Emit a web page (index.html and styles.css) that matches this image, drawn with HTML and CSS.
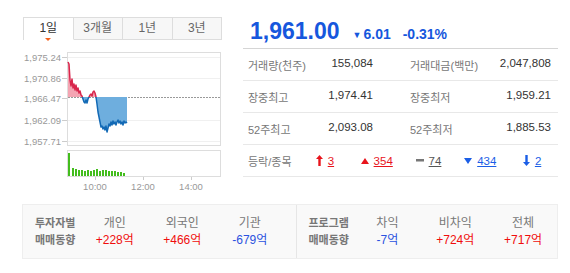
FILE: index.html
```html
<!DOCTYPE html>
<html lang="ko">
<head>
    <meta charset="UTF-8">
    <title>코스피 시세</title>
    <link rel="stylesheet" href="styles.css">
</head>
<body>
    <div class="page">
        <div class="top">
            <div class="left">
                <ul class="tabs">
                    <li class="tab on">1일</li>
                    <li class="tab">3개월</li>
                    <li class="tab">1년</li>
                    <li class="tab">3년</li>
                </ul>
                <svg class="chart" width="206" height="146" viewBox="16 48 206 146">
                    <defs>
                        <clipPath id="upClip"><rect x="67" y="50" width="155" height="47"/></clipPath>
                        <clipPath id="downClip"><rect x="67" y="97" width="155" height="50"/></clipPath>
                    </defs>
                    <g class="ylab">
                        <text x="61" y="61">1,975.24</text>
                        <text x="61" y="82">1,970.86</text>
                        <text x="61" y="102">1,966.47</text>
                        <text x="61" y="124">1,962.09</text>
                        <text x="61" y="145">1,957.71</text>
                    </g>
                    <g class="tick">
                        <line x1="62" y1="57.5" x2="67" y2="57.5"/>
                        <line x1="62" y1="78.5" x2="67" y2="78.5"/>
                        <line x1="62" y1="98.5" x2="67" y2="98.5"/>
                        <line x1="62" y1="120.5" x2="67" y2="120.5"/>
                        <line x1="62" y1="141.5" x2="67" y2="141.5"/>
                    </g>
                    <rect class="box" x="67.5" y="52.5" width="153" height="93"/>
                    <g class="grid">
                        <line x1="68" y1="57.5" x2="220" y2="57.5"/>
                        <line x1="68" y1="78.5" x2="220" y2="78.5"/>
                        <line x1="68" y1="120.5" x2="220" y2="120.5"/>
                        <line x1="68" y1="141.5" x2="220" y2="141.5"/>
                    </g>
                    <line class="base" x1="68" y1="97.5" x2="220" y2="97.5"/>
                    <polygon class="area-up" clip-path="url(#upClip)" points="68,97 68,62 69,64 70,80 71,86 72,79 73,88 74,84 75,90 76,85 77,91 78,88 79,93 80,91 81,95 82,96 83,99 84,102 85,103 86,100 87,103 88,99 89,97 90,95 91,94 92,96 93,92 94,91 95,93 96,97 97,104 98,112 99,117 100,122 101,127 102,126 103,129 104,127 105,130 106,126 107,132 108,128 109,124 110,126 111,122 112,125 113,121 114,124 115,122 116,125 117,122 118,120 119,123 120,121 121,124 122,122 123,125 124,121 125,123 126,122 127,123 127,97"/>
                    <polygon class="area-down" clip-path="url(#downClip)" points="68,97 68,62 69,64 70,80 71,86 72,79 73,88 74,84 75,90 76,85 77,91 78,88 79,93 80,91 81,95 82,96 83,99 84,102 85,103 86,100 87,103 88,99 89,97 90,95 91,94 92,96 93,92 94,91 95,93 96,97 97,104 98,112 99,117 100,122 101,127 102,126 103,129 104,127 105,130 106,126 107,132 108,128 109,124 110,126 111,122 112,125 113,121 114,124 115,122 116,125 117,122 118,120 119,123 120,121 121,124 122,122 123,125 124,121 125,123 126,122 127,123 127,97"/>
                    <polyline class="line-up" clip-path="url(#upClip)" points="68,62 69,64 70,80 71,86 72,79 73,88 74,84 75,90 76,85 77,91 78,88 79,93 80,91 81,95 82,96 83,99 84,102 85,103 86,100 87,103 88,99 89,97 90,95 91,94 92,96 93,92 94,91 95,93 96,97 97,104"/>
                    <polyline class="line-down" clip-path="url(#downClip)" points="81,95 82,96 83,99 84,102 85,103 86,100 87,103 88,99 89,97 90,95 95,93 96,97 97,104 98,112 99,117 100,122 101,127 102,126 103,129 104,127 105,130 106,126 107,132 108,128 109,124 110,126 111,122 112,125 113,121 114,124 115,122 116,125 117,122 118,120 119,123 120,121 121,124 122,122 123,125 124,121 125,123 126,122 127,123"/>
                    <rect class="box" x="67.5" y="150.5" width="153" height="26"/>
                    <g class="bars">
                        <rect x="68" y="153" width="2" height="23"/>
                        <rect x="72" y="168" width="2" height="8"/>
                        <rect x="75" y="169" width="2" height="7"/>
                        <rect x="78" y="170" width="2" height="6"/>
                        <rect x="81" y="170" width="2" height="6"/>
                        <rect x="84" y="171" width="2" height="5"/>
                        <rect x="87" y="170" width="2" height="6"/>
                        <rect x="90" y="171" width="2" height="5"/>
                        <rect x="93" y="170" width="2" height="6"/>
                        <rect x="96" y="169" width="2" height="7"/>
                        <rect x="99" y="171" width="2" height="5"/>
                        <rect x="102" y="170" width="2" height="6"/>
                        <rect x="105" y="170" width="2" height="6"/>
                        <rect x="108" y="171" width="2" height="5"/>
                        <rect x="111" y="171" width="2" height="5"/>
                        <rect x="114" y="171" width="2" height="5"/>
                        <rect x="117" y="172" width="2" height="4"/>
                        <rect x="120" y="172" width="2" height="4"/>
                        <rect x="123" y="173" width="2" height="3"/>
                    </g>
                    <g class="tick">
                        <line x1="95.5" y1="177" x2="95.5" y2="180"/>
                        <line x1="143.5" y1="177" x2="143.5" y2="180"/>
                        <line x1="191.5" y1="177" x2="191.5" y2="180"/>
                    </g>
                    <g class="xlab">
                        <text x="95" y="190">10:00</text>
                        <text x="143" y="190">12:00</text>
                        <text x="191" y="190">14:00</text>
                    </g>
                </svg>
            </div>
            <div class="right">
                <div class="price">
                    <strong class="now">1,961.00</strong>
                    <span class="chg"><em class="tri">▼</em>6.01</span>
                    <span class="rate">-0.31%</span>
                </div>
                <div class="stats">
                    <div class="row">
                        <div class="half"><span class="lab">거래량(천주)</span><span class="val">155,084</span></div>
                        <div class="half"><span class="lab">거래대금(백만)</span><span class="val">2,047,808</span></div>
                    </div>
                    <div class="row">
                        <div class="half"><span class="lab">장중최고</span><span class="val">1,974.41</span></div>
                        <div class="half"><span class="lab">장중최저</span><span class="val">1,959.21</span></div>
                    </div>
                    <div class="row">
                        <div class="half"><span class="lab">52주최고</span><span class="val">2,093.08</span></div>
                        <div class="half"><span class="lab">52주최저</span><span class="val">1,885.53</span></div>
                    </div>
                    <div class="row updown">
                        <span class="lab">등락/종목</span>
                        <a class="cnt red" href="#">
                            <svg width="7" height="11" viewBox="0 0 7 11"><path d="M3.5 0 L7 4 L4.7 4 L4.7 11 L2.3 11 L2.3 4 L0 4 Z"/></svg><u>3</u>
                        </a>
                        <a class="cnt red" href="#">
                            <svg width="8" height="6" viewBox="0 0 8 6"><path d="M4 0 L8 6 L0 6 Z"/></svg><u>354</u>
                        </a>
                        <a class="cnt gray" href="#">
                            <svg width="8" height="3" viewBox="0 0 8 3"><rect width="8" height="2.5"/></svg><u>74</u>
                        </a>
                        <a class="cnt blue" href="#">
                            <svg width="8" height="6" viewBox="0 0 8 6"><path d="M0 0 L8 0 L4 6 Z"/></svg><u>434</u>
                        </a>
                        <a class="cnt blue" href="#">
                            <svg width="7" height="11" viewBox="0 0 7 11"><path d="M2.3 0 L4.7 0 L4.7 7 L7 7 L3.5 11 L0 7 L2.3 7 Z"/></svg><u>2</u>
                        </a>
                    </div>
                </div>
            </div>
        </div>
        <div class="flow">
            <div class="group investor">
                <div class="ttl">투자자별<br>매매동향</div>
                <div class="cell"><span class="who">개인</span><span class="amt red">+228억</span></div>
                <div class="cell"><span class="who">외국인</span><span class="amt red">+466억</span></div>
                <div class="cell"><span class="who">기관</span><span class="amt blue">-679억</span></div>
            </div>
            <div class="group program">
                <div class="ttl">프로그램<br>매매동향</div>
                <div class="cell"><span class="who">차익</span><span class="amt blue">-7억</span></div>
                <div class="cell"><span class="who">비차익</span><span class="amt red">+724억</span></div>
                <div class="cell"><span class="who">전체</span><span class="amt red">+717억</span></div>
            </div>
        </div>
    </div>
</body>
</html>
```
FILE: styles.css
```css
body {
    margin: 0;
    padding: 0;
    background: #fff;
    color: #333;
    font-family: "Liberation Sans", "Noto Sans CJK KR", Arial, sans-serif;
    font-size: 12px;
}

.page {
    width: 570px;
    padding-top: 17px;
}

.top {
    display: flex;
}

/* left: period tabs + chart */
.left {
    width: 206px;
    margin-left: 16px;
}

.tabs {
    display: grid;
    grid-template-columns: repeat(4, 1fr);
    margin: 0 0 0 7px;
    padding: 0;
    list-style: none;
    height: 23px;
    border-top: 1px solid #ddd;
    border-left: 1px solid #ddd;
    box-sizing: border-box;
}

.tab {
    position: relative;
    background: #f7f7f7;
    border-right: 1px solid #ddd;
    border-bottom: 1px solid #ddd;
    color: #666;
    text-align: center;
    line-height: 21px;
    font-size: 12px;
}

.tab.on {
    background: #fff;
    border-bottom-color: #fff;
    color: #333;
}

.tab.on::after {
    content: "";
    position: absolute;
    left: 50%;
    bottom: -2px;
    margin-left: -3px;
    border-left: 3px solid transparent;
    border-right: 3px solid transparent;
    border-top: 3px solid #f5621e;
}

.chart {
    display: block;
    margin-top: 8px;
}

.chart text {
    font-family: "Liberation Sans", Arial, sans-serif;
    font-size: 9.5px;
    fill: #999;
}

.ylab text {
    text-anchor: end;
}

.xlab text {
    text-anchor: middle;
}

.tick line {
    stroke: #ccc;
    stroke-width: 1;
}

.box {
    fill: #fff;
    stroke: #ddd;
    stroke-width: 1;
}

.grid line {
    stroke: #f0f0f0;
    stroke-width: 1;
}

.base {
    stroke: #999;
    stroke-width: 1;
    stroke-dasharray: 2 1;
}

.area-up {
    fill: #f4a5b3;
}

.area-down {
    fill: #6eaede;
}

.line-up,
.line-down {
    fill: none;
    stroke-width: 1.5;
    stroke-linejoin: round;
}

.line-up {
    stroke: #d8264c;
}

.line-down {
    stroke: #1269b5;
}

.bars rect {
    fill: #43bd1d;
}

/* right: current price + stats */
.right {
    width: 315px;
    margin-left: 21px;
}

.price {
    display: flex;
    align-items: baseline;
    height: 31px;
    padding-left: 7px;
    border-bottom: 1px solid #d5d5d5;
    color: #1657dd;
    font-family: "Liberation Sans", Arial, sans-serif;
    font-weight: bold;
}

.now {
    font-size: 23px;
    line-height: 28px;
}

.chg {
    margin-left: 13px;
    font-size: 14px;
}

.tri {
    font-style: normal;
    font-size: 9px;
    margin-right: 2px;
    vertical-align: 1px;
}

.rate {
    margin-left: 12px;
    font-size: 14px;
}

.row {
    display: grid;
    grid-template-columns: 135px 1fr;
    column-gap: 27px;
    height: 31px;
    border-bottom: 1px solid #e8e8e8;
    align-items: center;
}

.half {
    display: flex;
    justify-content: space-between;
    padding: 0 5px;
}

.half + .half {
    padding-right: 7px;
}

.lab {
    color: #777;
    font-size: 11px;
}

.val {
    color: #333;
    font-size: 11.5px;
}

.row.updown {
    grid-template-columns: 51px repeat(5, 1fr);
    column-gap: 0;
    padding-left: 5px;
}

.cnt {
    display: flex;
    align-items: center;
    justify-content: center;
    gap: 5px;
    font-size: 11.5px;
    text-decoration: none;
}

.cnt svg {
    display: block;
}

.cnt.red { color: #e8141c; }
.cnt.red svg { fill: #e8141c; }
.cnt.gray { color: #555; }
.cnt.gray svg { fill: #777; }
.cnt.blue { color: #1b5ee6; }
.cnt.blue svg { fill: #1b5ee6; }

/* investor / program flow */
.flow {
    display: flex;
    margin: 10px 0 0 22px;
    width: 536px;
    height: 55px;
    background: #f9f9f9;
    border: 1px solid #eee;
    box-sizing: border-box;
}

.group {
    flex: 1;
    display: grid;
    grid-template-columns: 58px repeat(3, 1fr);
    align-items: center;
    padding-right: 12px;
}

.group.program {
    grid-template-columns: 57px repeat(3, 1fr);
    padding-right: 0;
    border-left: 1px solid #e6e6e6;
}

.ttl {
    padding-left: 12px;
    color: #777;
    font-weight: bold;
    font-size: 11px;
    line-height: 17px;
    white-space: nowrap;
}

.cell {
    display: flex;
    flex-direction: column;
    align-items: center;
    line-height: 17px;
}

.who {
    color: #777;
    font-size: 12px;
}

.amt {
    font-size: 12px;
}

.amt.red { color: #f00d0d; }
.amt.blue { color: #2b52e0; }
```
